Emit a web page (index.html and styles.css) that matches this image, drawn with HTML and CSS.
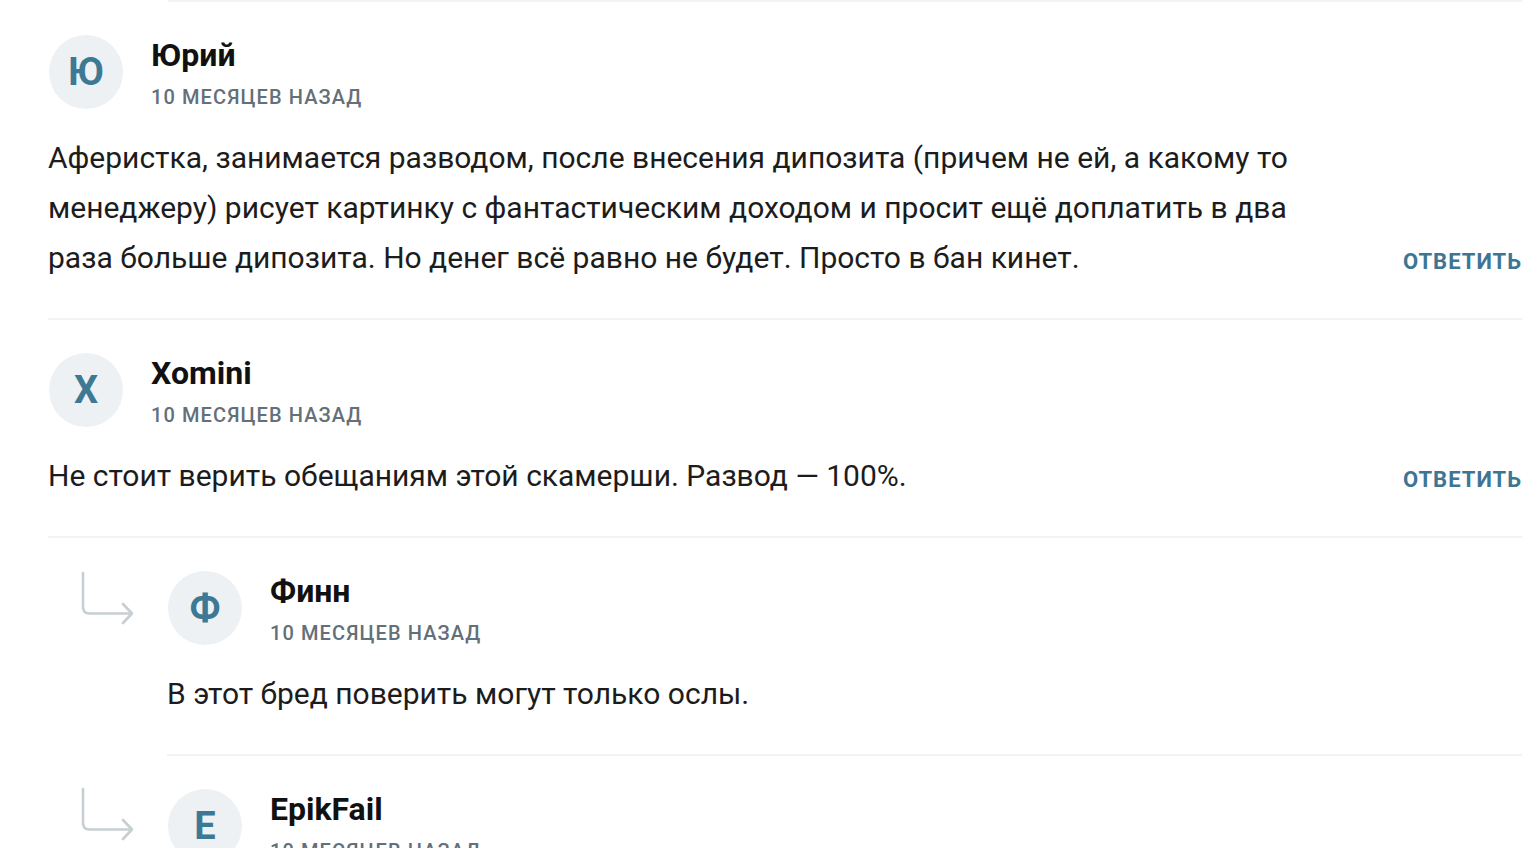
FILE: index.html
```html
<!DOCTYPE html>
<html lang="ru">
<head>
<meta charset="utf-8">
<link rel="stylesheet" href="styles.css">
</head>
<body>
<div class="list">
  <div class="comment first">
    <div class="head">
      <div class="avatar">Ю</div>
      <div class="meta">
        <div class="name">Юрий</div>
        <div class="date">10 месяцев назад</div>
      </div>
    </div>
    <div class="row">
      <p class="text">Аферистка, занимается разводом, после внесения дипозита (причем не ей, а какому то менеджеру) рисует картинку с фантастическим доходом и просит ещё доплатить в два раза больше дипозита. Но денег всё равно не будет. Просто в бан кинет.</p>
      <a class="reply">Ответить</a>
    </div>
  </div>
  <div class="comment">
    <div class="head">
      <div class="avatar">X</div>
      <div class="meta">
        <div class="name">Xomini</div>
        <div class="date">10 месяцев назад</div>
      </div>
    </div>
    <div class="row">
      <p class="text">Не стоит верить обещаниям этой скамерши. Развод — 100%.</p>
      <a class="reply">Ответить</a>
    </div>
  </div>
  <div class="nested">
    <svg class="arrow" viewBox="0 0 56 56" width="56" height="56"><path d="M3 3 V37 Q3 43.5 9.5 43.5 H52 M43 34 L52 43.5 L43 53" fill="none" stroke="#c8cfd2" stroke-width="2.6" stroke-linecap="round" stroke-linejoin="round"/></svg>
    <div class="comment sub">
      <div class="head">
        <div class="avatar">Ф</div>
        <div class="meta">
          <div class="name">Финн</div>
          <div class="date">10 месяцев назад</div>
        </div>
      </div>
      <div class="row">
        <p class="text">В этот бред поверить могут только ослы.</p>
      </div>
    </div>
  </div>
  <div class="nested">
    <svg class="arrow" viewBox="0 0 56 56" width="56" height="56"><path d="M3 3 V37 Q3 43.5 9.5 43.5 H52 M43 34 L52 43.5 L43 53" fill="none" stroke="#c8cfd2" stroke-width="2.6" stroke-linecap="round" stroke-linejoin="round"/></svg>
    <div class="comment sub">
      <div class="head">
        <div class="avatar">E</div>
        <div class="meta">
          <div class="name">EpikFail</div>
          <div class="date">10 месяцев назад</div>
        </div>
      </div>
    </div>
  </div>
</div>
</body>
</html>
```
FILE: styles.css
```css
html, body {
  margin: 0;
  padding: 0;
  background: #ffffff;
  overflow: hidden;
}
body {
  font-family: Roboto, "Liberation Sans", sans-serif;
  color: #1a1a1a;
  height: 848px;
}
.list {
  margin-left: 48px;
  width: 1474px;
  display: flex;
  flex-direction: column;
}
.comment {
  border-top: 2px solid #f1f3f4;
  padding: 33px 0 35px;
}
.comment.first {
  border-top: none;
  padding-top: 35px;
  position: relative;
}
.comment.first::before {
  content: "";
  position: absolute;
  top: 0;
  left: 120px;
  right: 0;
  height: 2px;
  background: #f1f3f4;
}
.head {
  display: flex;
  align-items: flex-start;
  gap: 28px;
}
.avatar {
  width: 74px;
  height: 74px;
  border-radius: 50%;
  background: #edf1f4;
  color: #3d7995;
  font-weight: 700;
  font-size: 38px;
  display: flex;
  align-items: center;
  justify-content: center;
  flex: none;
  margin-left: 1px;
}
.meta {
  display: flex;
  flex-direction: column;
  padding-top: 2px;
}
.name {
  font-weight: 700;
  font-size: 32px;
  line-height: 36px;
  color: #111;
}
.date {
  margin-top: 12px;
  font-weight: 500;
  font-size: 20px;
  line-height: 24px;
  letter-spacing: 1.1px;
  text-transform: uppercase;
  color: #636f79;
}
.row {
  display: flex;
  align-items: flex-end;
  justify-content: space-between;
  margin-top: 24px;
}
.text {
  margin: 0;
  font-size: 30px;
  line-height: 50px;
  color: #1c1c1c;
  max-width: 1310px;
}
.reply {
  font-weight: 700;
  font-size: 22px;
  line-height: 50px;
  letter-spacing: 1px;
  text-transform: uppercase;
  color: #3e7593;
  position: relative;
  top: 4px;
}
.nested {
  display: flex;
  border-top: 2px solid #f1f3f4;
}
.nested + .nested {
  border-top: none;
}
.nested + .nested .comment.sub {
  border-top: 2px solid #f1f3f4;
}
.arrow {
  flex: none;
  margin: 32px 0 0 32px;
  width: 56px;
  height: 56px;
}
.comment.sub {
  flex: 1;
  border-top: none;
  margin-left: 31px;
  padding-top: 33px;
}
```
